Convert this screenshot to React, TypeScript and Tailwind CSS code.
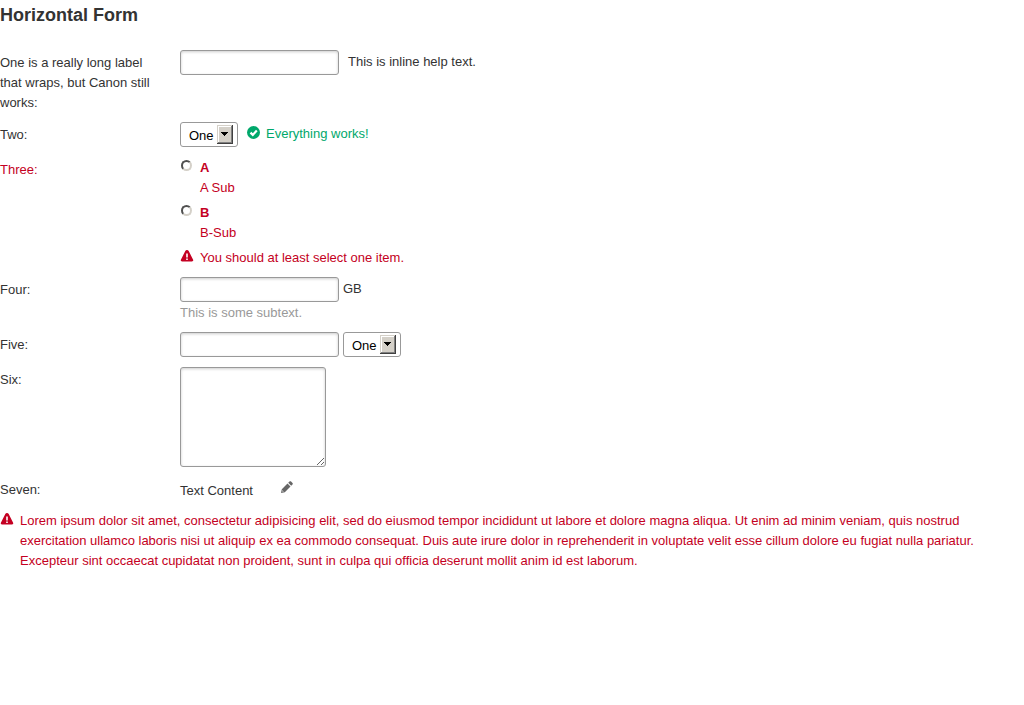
import { useId, type ReactNode } from "react";

const box =
  "mb-px rounded-[3px] border border-[#999] bg-white shadow-[inset_0_1px_3px_rgba(0,0,0,0.2)] outline-none focus:border-[#3a8bd6]";

function Row({ label, htmlFor, invalid, children }: { label: string; htmlFor?: string; invalid?: boolean; children: ReactNode }) {
  const tone = invalid ? "text-[#c40022]" : "";
  return (
    <div className={`flex items-start ${tone}`}>
      <div className="w-[160px] shrink-0 pt-[3px]">
        {htmlFor ? <label htmlFor={htmlFor}>{label}</label> : <span>{label}</span>}
      </div>
      <div className="ml-5 min-w-0 flex-1">{children}</div>
    </div>
  );
}

function TextBox({ id }: { id: string }) {
  return <input id={id} type="text" className={`block h-[25px] w-[159px] px-1.5 text-black ${box}`} />;
}

function Select({ id, label }: { id?: string; label?: string }) {
  return (
    <div className="relative mb-px h-[25px] w-[58px]">
      <select
        id={id}
        aria-label={label}
        className="h-full w-full appearance-none rounded-[3px] border border-[#999] bg-white pt-0.5 pl-2 text-black outline-none"
      >
        <option>One</option>
        <option>Two</option>
        <option>Three</option>
      </select>
      <svg
        className="pointer-events-none absolute top-[3px] right-[5px] h-[19px] w-4"
        viewBox="0 0 16 19"
        shapeRendering="crispEdges"
        aria-hidden="true"
      >
        <path fill="#404040" d="M0 0h16v19H0z" />
        <path fill="#d4d0c8" d="M0 0h15v18H0z" />
        <path fill="#808080" d="M1 1h14v17H1z" />
        <path fill="#fff" d="M1 1h13v16H1z" />
        <path fill="#d4d0c8" d="M2 2h12v15H2z" />
        <path fill="#000" d="M4 7h7v1H4zM5 8h5v1H5zM6 9h3v1H6zM7 10h1v1H7z" />
      </svg>
    </div>
  );
}

function ErrorIcon() {
  return (
    <svg className="mt-[3px] h-3 w-3.5 shrink-0" viewBox="0 0 14 12" aria-hidden="true">
      <path
        fill="currentColor"
        fillRule="evenodd"
        d="M7 0c.8 0 1.3.4 1.7 1.1l4.300 8.300c.6 1.200.1 2-1.1 2H2.100c-1.200 0-1.700-.8-1.100-2l4.300-8.300C5.700.4 6.200 0 7 0ZM6.200 3.500v4h1.600v-4H6.200Zm0 5v1.500h1.600V8.500H6.200Z"
      />
    </svg>
  );
}

function ErrorMessage({ children }: { children: ReactNode }) {
  return (
    <div role="alert" className="flex items-start gap-1.5 text-[#c40022]">
      <ErrorIcon />
      <p className="min-w-0 flex-1 pt-px">{children}</p>
    </div>
  );
}

function Option({ name, title, sub }: { name: string; title: string; sub: string }) {
  return (
    <label className="flex items-start">
      <input
        type="radio"
        name={name}
        className="mt-[3px] mr-2 ml-px h-[11px] w-[11px] appearance-none rounded-full border-2 border-t-[#505050] border-r-[#d4d0c8] border-b-[#d4d0c8] border-l-[#505050] bg-white checked:bg-black"
      />
      <span className="pt-px">
        <strong className="block font-bold">{title}</strong>
        <span className="block">{sub}</span>
      </span>
    </label>
  );
}

export default function App() {
  const id = useId();
  return (
    <main className="bg-white font-['Liberation_Sans',Arial,sans-serif] text-[13px] leading-5 text-[#333]">
      <h1 className="pt-[5px] text-lg leading-5 font-bold">Horizontal Form</h1>
      <form className="mt-[25px] flex flex-col gap-[9px]" onSubmit={(e) => e.preventDefault()}>
        <Row label="One is a really long label that wraps, but Canon still works:" htmlFor={`${id}1`}>
          <div className="flex items-start gap-[9px]">
            <TextBox id={`${id}1`} />
            <span className="pt-0.5">This is inline help text.</span>
          </div>
        </Row>
        <Row label="Two:" htmlFor={`${id}2`}>
          <div className="flex items-start">
            <Select id={`${id}2`} />
            <div className="ml-2 flex items-start gap-1.5 pt-0.5 text-[#00a86b]">
              <svg className="mt-0.5 h-3.5 w-3.5" viewBox="0 0 14 14" aria-hidden="true">
                <circle cx="7.500" cy="6.500" r="6.500" fill="currentColor" />
                <path d="m4.500 6.600 2.300 2.300 4-4.300" fill="none" stroke="#fff" strokeWidth="2.200" />
              </svg>
              <span>Everything works!</span>
            </div>
          </div>
        </Row>
        <Row label="Three:" invalid>
          <div className="flex flex-col gap-1" role="radiogroup" aria-label="Three">
            <Option name={`${id}3`} title="A" sub="A Sub" />
            <Option name={`${id}3`} title="B" sub="B-Sub" />
            <ErrorMessage>You should at least select one item.</ErrorMessage>
          </div>
        </Row>
        <Row label="Four:" htmlFor={`${id}4`}>
          <div className="flex items-start gap-1">
            <TextBox id={`${id}4`} />
            <span className="pt-0.5">GB</span>
          </div>
          <p className="text-[#999]">This is some subtext.</p>
        </Row>
        <Row label="Five:" htmlFor={`${id}5`}>
          <div className="flex items-start gap-1">
            <TextBox id={`${id}5`} />
            <Select label="Five unit" />
          </div>
        </Row>
        <Row label="Six:" htmlFor={`${id}6`}>
          <textarea id={`${id}6`} className={`block h-[100px] w-[146px] resize p-1.5 text-black ${box}`} />
        </Row>
        <Row label="Seven:">
          <div className="flex items-start">
            <span className="pt-1">Text Content</span>
            <button type="button" aria-label="Edit" className="ml-7 pt-1 text-[#666]">
              <svg className="h-3 w-3" viewBox="0 0 12 12" aria-hidden="true">
                <path fill="currentColor" d="m0 12 .8-3.800 5.700-5.700 3 3-5.700 5.700L0 12ZM7.200 1.800 8.500.5c.5-.5 1.100-.5 1.600 0l1.400 1.400c.5.5.5 1.100 0 1.600l-1.300 1.300-3-3Z" />
                <path fill="#fff" d="m1.400 9.300 1.300 1.300-.8.200-.7-.7.200-.8Z" />
              </svg>
            </button>
          </div>
        </Row>
        <ErrorMessage>
          Lorem ipsum dolor sit amet, consectetur adipisicing elit, sed do eiusmod tempor incididunt ut labore et dolore
          magna aliqua. Ut enim ad minim veniam, quis nostrud exercitation ullamco laboris nisi ut aliquip ex ea commodo
          consequat. Duis aute irure dolor in reprehenderit in voluptate velit esse cillum dolore eu fugiat nulla
          pariatur. Excepteur sint occaecat cupidatat non proident, sunt in culpa qui officia deserunt mollit anim id est
          laborum.
        </ErrorMessage>
      </form>
    </main>
  );
}
